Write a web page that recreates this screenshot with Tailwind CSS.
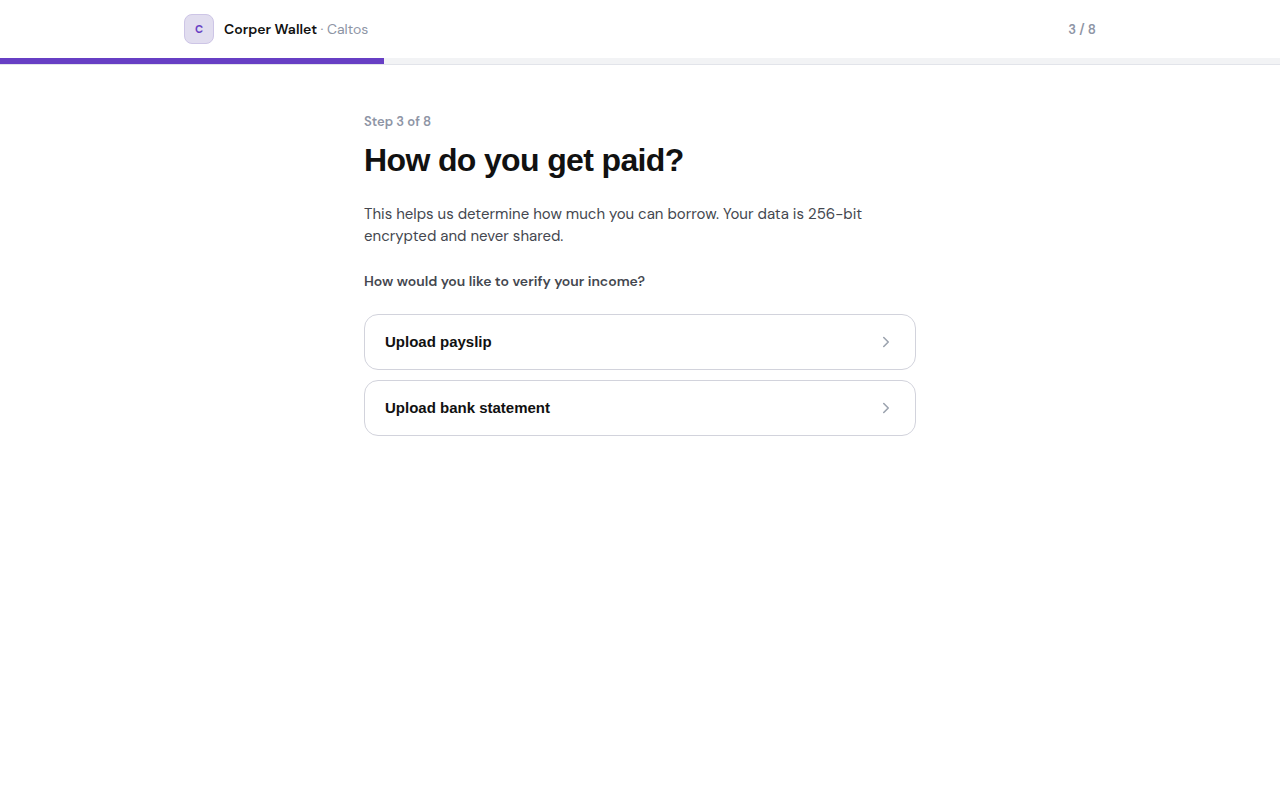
<!DOCTYPE html>
<html lang="en">

<head>
    <meta charset="UTF-8">
    <meta name="viewport" content="width=device-width, initial-scale=1.0">
    <title>Corper Wallet - How do you get paid?</title>
    <script src="https://cdn.jsdelivr.net/npm/@tailwindcss/browser@4"></script>
</head>

<body class="min-h-screen bg-white font-['DM_Sans','Inter',sans-serif] text-[#111111]">

<!-- Header -->
<header class="border-b border-[#e2e4ea] bg-white">
    <div class="mx-auto flex h-[58px] max-w-[960px] items-center justify-between px-6">
        <div class="flex items-center gap-2.5">
            <div class="flex size-[30px] items-center justify-center rounded-lg border border-[#cdc5e6] bg-[#e1ddef] text-[11px] font-bold text-[#673fc4]">C</div>
            <p class="text-sm font-semibold">Corper Wallet <span class="font-normal text-[#8e95a5]">· Caltos</span></p>
        </div>
        <span class="text-[13px] leading-[21px] font-semibold text-[#8e95a5]">3 / 8</span>
    </div>
    <!-- Progress -->
    <div class="h-1.5 bg-[#f2f3f5]">
        <div class="h-full w-[30%] bg-[#673fc4]"></div>
    </div>
</header>

<!-- Step -->
<main class="mx-auto max-w-[600px] px-6 pt-12">
    <p class="text-[13px] leading-[18px] font-semibold text-[#8e95a5]">Step 3 of 8</p>
    <h1 class="mt-2 font-['Liberation_Sans',sans-serif] text-[32px] leading-[42px] font-bold tracking-[-0.02em]">How do you get paid?</h1>
    <p class="mt-[22px] text-[15px] leading-[22px] text-[#44474f]">This helps us determine how much you can borrow. Your data is 256-bit encrypted and never shared.</p>
    <p class="mt-6 text-sm leading-5 font-semibold text-[#44474f]">How would you like to verify your income?</p>

    <!-- Options -->
    <div class="mt-[23px] flex flex-col gap-2.5">
        <button type="button" class="flex h-14 w-full items-center justify-between rounded-[14px] border border-[#d2d3dc] bg-white px-5 text-left font-['Liberation_Sans',sans-serif] text-[15px] font-bold hover:border-[#673fc4]">
            Upload payslip
            <svg class="size-[18px] text-[#9ca3af]" viewBox="0 0 18 18" fill="none" stroke="currentColor" stroke-width="1.6" stroke-linecap="round" stroke-linejoin="round" aria-hidden="true"><path d="M6.75 4.5 11.25 9l-4.5 4.5"/></svg>
        </button>
        <button type="button" class="flex h-14 w-full items-center justify-between rounded-[14px] border border-[#d2d3dc] bg-white px-5 text-left font-['Liberation_Sans',sans-serif] text-[15px] font-bold hover:border-[#673fc4]">
            Upload bank statement
            <svg class="size-[18px] text-[#9ca3af]" viewBox="0 0 18 18" fill="none" stroke="currentColor" stroke-width="1.6" stroke-linecap="round" stroke-linejoin="round" aria-hidden="true"><path d="M6.75 4.5 11.25 9l-4.5 4.5"/></svg>
        </button>
    </div>
</main>

</body>

</html>
